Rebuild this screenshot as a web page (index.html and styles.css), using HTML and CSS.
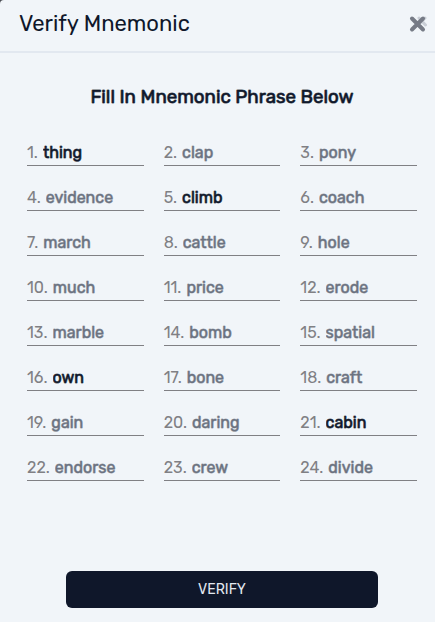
FILE: index.html
```
<!DOCTYPE html>
<html lang="en">
<head>
<meta charset="utf-8">
<meta name="viewport" content="width=device-width, initial-scale=1">
<title>Verify Mnemonic</title>
<link rel="stylesheet" href="styles.css">
</head>
<body>
<main class="modal">
  <header class="modal-header">
    <h1 class="modal-title">Verify Mnemonic</h1>
    <button class="close" type="button" aria-label="Close">
      <svg class="close-icon" viewBox="0 0 20 20" aria-hidden="true">
        <path class="close-shadow" d="M12 4l6.500 7M18 4l-6 6"/>
        <path class="close-cross" d="M5 4.500l11 11M16 4.500l-11 11"/>
      </svg>
    </button>
  </header>
  <form class="modal-body">
    <h3 class="subtitle">Fill In Mnemonic Phrase Below</h3>
    <div class="words">
      <div class="word"><label for="w1">1.</label><input id="w1" type="text" value="thing"></div>
      <div class="word"><label for="w2">2.</label><input id="w2" type="text" value="clap" disabled></div>
      <div class="word"><label for="w3">3.</label><input id="w3" type="text" value="pony" disabled></div>
      <div class="word"><label for="w4">4.</label><input id="w4" type="text" value="evidence" disabled></div>
      <div class="word"><label for="w5">5.</label><input id="w5" type="text" value="climb"></div>
      <div class="word"><label for="w6">6.</label><input id="w6" type="text" value="coach" disabled></div>
      <div class="word"><label for="w7">7.</label><input id="w7" type="text" value="march" disabled></div>
      <div class="word"><label for="w8">8.</label><input id="w8" type="text" value="cattle" disabled></div>
      <div class="word"><label for="w9">9.</label><input id="w9" type="text" value="hole" disabled></div>
      <div class="word"><label for="w10">10.</label><input id="w10" type="text" value="much" disabled></div>
      <div class="word"><label for="w11">11.</label><input id="w11" type="text" value="price" disabled></div>
      <div class="word"><label for="w12">12.</label><input id="w12" type="text" value="erode" disabled></div>
      <div class="word"><label for="w13">13.</label><input id="w13" type="text" value="marble" disabled></div>
      <div class="word"><label for="w14">14.</label><input id="w14" type="text" value="bomb" disabled></div>
      <div class="word"><label for="w15">15.</label><input id="w15" type="text" value="spatial" disabled></div>
      <div class="word"><label for="w16">16.</label><input id="w16" type="text" value="own"></div>
      <div class="word"><label for="w17">17.</label><input id="w17" type="text" value="bone" disabled></div>
      <div class="word"><label for="w18">18.</label><input id="w18" type="text" value="craft" disabled></div>
      <div class="word"><label for="w19">19.</label><input id="w19" type="text" value="gain" disabled></div>
      <div class="word"><label for="w20">20.</label><input id="w20" type="text" value="daring" disabled></div>
      <div class="word"><label for="w21">21.</label><input id="w21" type="text" value="cabin"></div>
      <div class="word"><label for="w22">22.</label><input id="w22" type="text" value="endorse" disabled></div>
      <div class="word"><label for="w23">23.</label><input id="w23" type="text" value="crew" disabled></div>
      <div class="word"><label for="w24">24.</label><input id="w24" type="text" value="divide" disabled></div>
    </div>
    <button class="verify" type="button">VERIFY</button>
  </form>
</main>
</body>
</html>
```
FILE: styles.css
```
* {
  box-sizing: border-box;
}

body {
  margin: 0;
  background: #494c52;
  font-family: Rubik, Roboto, sans-serif;
  color: #0f172a;
}

.modal {
  min-height: 100vh;
  background: #f1f5f9;
  border-top-left-radius: 4px;
}

.modal-header {
  display: flex;
  align-items: center;
  justify-content: space-between;
  height: 53px;
  padding: 0 8px 3px 19px;
  border-bottom: 2px solid #e2e8f0;
}

.modal-title {
  margin: 0;
  font-size: 22px;
  line-height: 32px;
  font-weight: 400;
}

.close {
  display: flex;
  padding: 0;
  border: 0;
  background: none;
  cursor: pointer;
}

.close-icon {
  width: 20px;
  height: 20px;
  fill: none;
  stroke-linecap: round;
}

.close-cross {
  stroke: #767b86;
  stroke-width: 4;
}

.close-shadow {
  stroke: #c9ced6;
  stroke-width: 3;
}

.modal-body {
  display: flex;
  flex-direction: column;
  align-items: center;
  padding: 32px 18px 14px 27px;
}

.subtitle {
  margin: 0;
  line-height: 24px;
  font-weight: 400;
  -webkit-text-stroke: 1px rgb(15 23 42 / 75%);
}

.words {
  display: grid;
  grid-template-columns: repeat(3, minmax(0, 1fr));
  gap: 20px;
  width: 100%;
  margin: 32px 0 90px;
}

.word {
  display: flex;
  gap: 5px;
  height: 25px;
  border-bottom: 1px solid #808084;
  font-size: 16px;
  line-height: 24px;
}

.word label {
  color: #808084;
}

.word input {
  flex: 1;
  min-width: 0;
  padding: 0;
  border: 0;
  outline: 0;
  background: none;
  font: inherit;
  color: #0f172a;
  -webkit-text-stroke: 1px rgb(15 23 42 / 70%);
}

.word input:disabled {
  color: #6b7280;
  -webkit-text-stroke-color: rgb(107 114 128 / 60%);
}

.verify {
  width: 80%;
  height: 37px;
  border: 0;
  border-radius: 6px;
  background: #0f172a;
  color: #e2e8f0;
  font: inherit;
  font-size: 14px;
  cursor: pointer;
}
```
